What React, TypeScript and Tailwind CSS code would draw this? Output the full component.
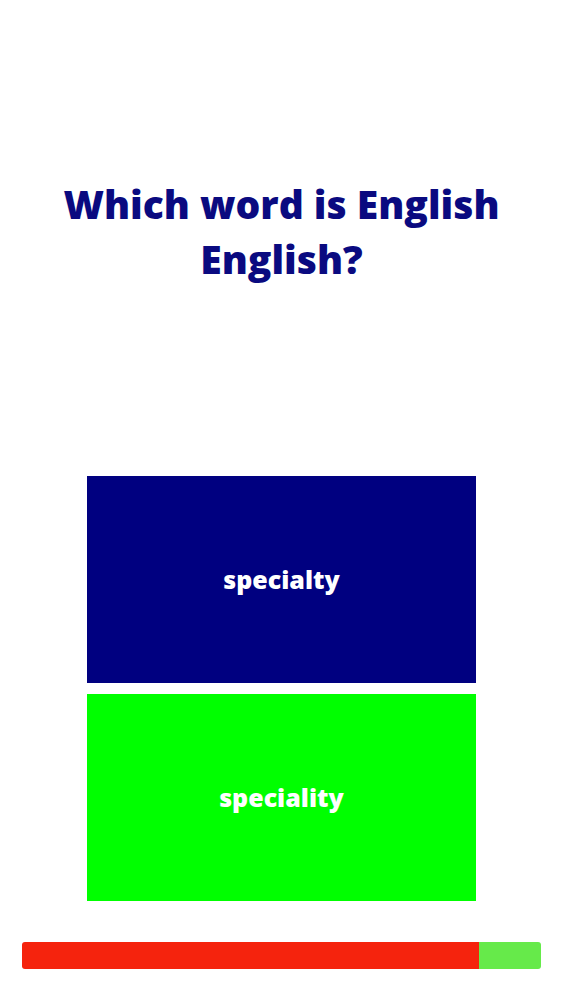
export default function App() {
  return (
    <div className="w-[563px] h-[1000px] bg-white flex flex-col items-center" style={{ fontFamily: "'Open Sans', Lato, sans-serif" }}>
      <div className="h-[176px]" />
      <h1 className="text-[39px] leading-[55px] font-extrabold text-[#0a0a80] text-center w-[520px]">
        Which word is English English?
      </h1>
      <div className="h-[190px]" />
      <div className="flex flex-col gap-[11px] w-[389px]">
        <div className="h-[207px] bg-[#000080] flex items-center justify-center text-white text-[25px] font-extrabold">
          specialty
        </div>
        <div className="h-[207px] bg-[#00ff00] flex items-center justify-center text-white text-[25px] font-extrabold">
          speciality
        </div>
      </div>
      <div className="h-[41px]" />
      <div className="w-[519px] h-[27px] flex rounded-[3px] overflow-hidden">
        <div className="w-[457px] bg-[#f5230d]" />
        <div className="flex-1 bg-[#66ea4a]" />
      </div>
    </div>
  );
}
